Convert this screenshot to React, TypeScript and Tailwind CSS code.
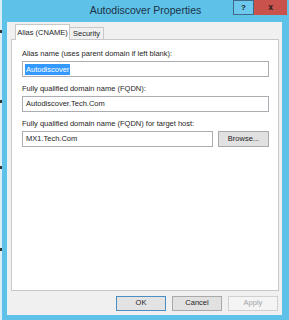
import React from 'react';

const ui = { fontFamily: '"Liberation Sans", Arial, sans-serif' };

function Field({ label, value, selected }: { label: string; value: string; selected?: boolean }) {
  return (
    <div className="flex flex-col">
      <div className="h-[14px] leading-[14px] text-[7.5px] text-[#1e1e1e]">{label}</div>
      <div className="h-[16px] border border-[#abadb3] bg-white flex items-center pl-[2px] text-[7.5px] text-[#1e1e1e]">
        {selected ? (
          <span className="bg-[#3399ff] text-white h-[11px] leading-[11px] px-[1px]">{value}</span>
        ) : (
          <span className="px-[1px]">{value}</span>
        )}
      </div>
    </div>
  );
}

function Button({ label, variant }: { label: string; variant: 'default' | 'normal' | 'disabled' }) {
  const cls =
    variant === 'default'
      ? 'border-[#4a8ec2] bg-[#e3e3e3] text-[#1e1e1e]'
      : variant === 'normal'
      ? 'border-[#a9a9a9] bg-[#e1e1e1] text-[#1e1e1e]'
      : 'border-[#d0d0d0] bg-[#f4f4f4] text-[#a3a3a3]';
  return (
    <div className={`w-[50px] h-[15px] border flex items-center justify-center text-[7.5px] ${cls}`}>
      {label}
    </div>
  );
}

export default function App() {
  return (
    <div className="w-[289px] h-[320px] flex bg-[#5ec2e8] overflow-hidden" style={ui}>
      {/* strip of the desktop behind the window */}
      <div className="w-[2px] h-full bg-[#d9eef6] relative">
        <div className="absolute left-0 top-[30px] w-[2px] h-[3px] bg-[#333]" />
        <div className="absolute left-0 top-[100px] w-[2px] h-[3px] bg-[#333]" />
        <div className="absolute left-0 top-[166px] w-[2px] h-[3px] bg-[#333]" />
        <div className="absolute left-0 top-[248px] w-[2px] h-[3px] bg-[#333]" />
      </div>

      <div className="flex-1 flex flex-col pl-[5px] pr-[7px] pb-[5px]">
        {/* title bar */}
        <div className="h-[22px] relative flex items-center justify-center -ml-[7px] -mr-[7px]">
          <span className="text-[10.5px] text-[#1c3147] pl-[2px]" style={{ fontFamily: '"Liberation Sans", Arial, sans-serif' }}>
            Autodiscover Properties
          </span>
          <div className="absolute top-0 right-[2px] flex">
            <div className="w-[21px] h-[15px] border border-[#3d6a86] bg-[#6cc8ec] flex items-center justify-center text-[8px] font-bold text-[#1a1a1a]">
              ?
            </div>
            <div className="w-[33px] h-[15px] bg-[#c9524c] flex items-center justify-center text-[8.5px] font-bold text-[#1a1a1a]">
              x
            </div>
          </div>
        </div>

        {/* client area */}
        <div className="flex-1 bg-[#f0f0f0] flex flex-col pl-[3px] pr-[3px] border-l border-[#e6f4fa]">
          {/* tabs */}
          <div className="h-[17px] flex items-end pl-[4px] relative z-10">
            <div className="h-[16px] w-[55px] bg-white border border-b-0 border-[#c8c8c8] flex items-center justify-center text-[7.5px] text-[#1e1e1e] -mb-[1px]">
              Alias (CNAME)
            </div>
            <div className="h-[12px] w-[34px] bg-[#f0f0f0] border border-l-0 border-b-0 border-[#c8c8c8] flex items-center justify-center text-[7.5px] text-[#1e1e1e]">
              Security
            </div>
          </div>

          {/* tab panel */}
          <div className="h-[252px] bg-white border border-[#c8c8c8] flex flex-col gap-[5px] pl-[10px] pr-[9px] pt-[7px]">
            <Field label="Alias name (uses parent domain if left blank):" value="Autodiscover" selected />
            <Field label="Fully qualified domain name (FQDN):" value="Autodiscover.Tech.Com" />
            <div className="flex flex-col">
              <div className="h-[14px] leading-[14px] text-[7.5px] text-[#1e1e1e]">
                Fully qualified domain name (FQDN) for target host:
              </div>
              <div className="flex gap-[5px]">
                <div className="flex-1 h-[16px] border border-[#abadb3] bg-white flex items-center pl-[3px] text-[7.5px] text-[#1e1e1e]">
                  MX1.Tech.Com
                </div>
                <div className="w-[51px] h-[16px] border border-[#a9a9a9] bg-[#e1e1e1] flex items-center justify-center text-[7.5px] text-[#1e1e1e]">
                  Browse...
                </div>
              </div>
            </div>
          </div>

          {/* dialog buttons */}
          <div className="flex-1 flex items-center justify-end gap-[6px] pr-[1px]">
            <Button label="OK" variant="default" />
            <Button label="Cancel" variant="normal" />
            <Button label="Apply" variant="disabled" />
          </div>
        </div>
      </div>
    </div>
  );
}
